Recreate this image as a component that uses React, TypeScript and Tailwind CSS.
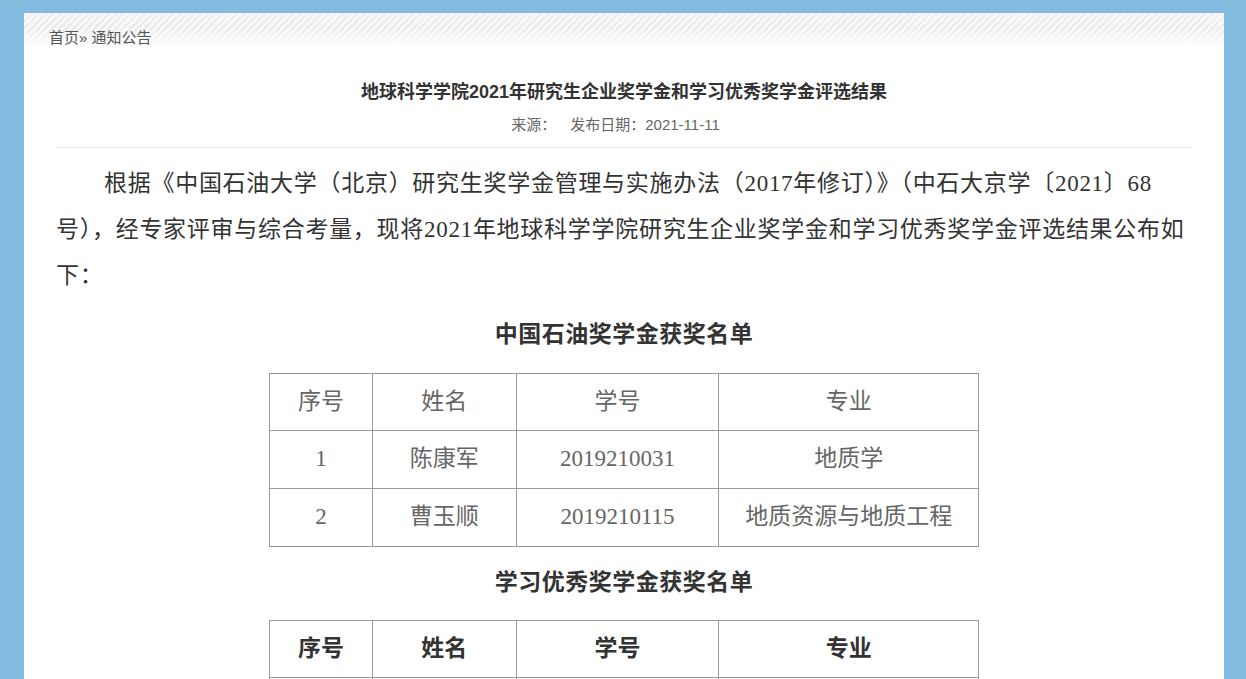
import React from 'react';

const sans = "font-['Liberation_Sans','Noto_Sans_CJK_SC',sans-serif]";
const serif = "font-['Liberation_Serif','Noto_Sans_CJK_SC',serif]";

const oilRows = [
  { no: '1', name: '陈康军', id: '2019210031', major: '地质学' },
  { no: '2', name: '曹玉顺', id: '2019210115', major: '地质资源与地质工程' },
];

function AwardTable({ rows, boldHead }: { rows: typeof oilRows; boldHead?: boolean }) {
  const th = `border border-[#999] h-[57px] text-center ${boldHead ? 'font-bold text-[#333]' : 'font-normal text-[#666]'}`;
  const td = 'border border-[#999] h-[58px] text-center text-[#666]';
  return (
    <table className="mx-auto w-[710px] border-collapse text-[23px]">
      <colgroup>
        <col className="w-[103px]" />
        <col className="w-[144px]" />
        <col className="w-[203px]" />
        <col className="w-[260px]" />
      </colgroup>
      <thead>
        <tr>
          <th className={th}>序号</th>
          <th className={th}>姓名</th>
          <th className={th}>学号</th>
          <th className={th}>专业</th>
        </tr>
      </thead>
      <tbody>
        {rows.map((r) => (
          <tr key={r.id}>
            <td className={td}>{r.no}</td>
            <td className={td}>{r.name}</td>
            <td className={td}>{r.id}</td>
            <td className={td}>{r.major}</td>
          </tr>
        ))}
      </tbody>
    </table>
  );
}

export default function App() {
  return (
    <div className="min-h-screen bg-[#82bbdf] pt-[13px] pl-[24px] pr-[22px]">
      <div className="bg-white min-h-[700px]">
        {/* breadcrumb strip */}
        <div className="relative h-[35px] bg-[repeating-linear-gradient(135deg,#e8e8e8_0px,#e8e8e8_2px,#f7f7f7_2px,#f7f7f7_5px)]">
          <div className="absolute inset-0 bg-linear-to-b from-white/30 via-white/0 via-40% to-white" />
          <div className={`relative pl-[25px] pt-[16px] text-[15px] leading-[18px] text-[#555] ${sans}`}>
            首页» 通知公告
          </div>
        </div>

        <div className="px-[32px]">
          <h1 className={`mt-[29px] text-center text-[18px] leading-[30px] font-bold text-[#333] ${sans}`}>
            地球科学学院2021年研究生企业奖学金和学习优秀奖学金评选结果
          </h1>
          <div className={`mt-[8px] pr-[17px] text-center text-[15px] leading-[20px] text-[#666] ${sans}`}>
            来源：<span className="ml-[14px]">发布日期：2021-11-11</span>
          </div>
          <div className="mt-[12px] h-px bg-[#e8e8e8]" />

          <div className={`${serif} text-[#333]`}>
            <p className="mt-[13px] text-[23px] leading-[46px] indent-[48px] tracking-[0.72px]">
              根据《中国石油大学（北京）研究生奖学金管理与实施办法（2017年修订）》（中石大京学〔2021〕68号），经专家评审与综合考量，现将2021年地球科学学院研究生企业奖学金和学习优秀奖学金评选结果公布如下：
            </p>

            <p className="mt-[13px] text-center text-[23px] leading-[46px] font-bold tracking-[0.5px]">中国石油奖学金获奖名单</p>
            <div className="mt-[15px]">
              <AwardTable rows={oilRows} />
            </div>

            <p className="mt-[13px] text-center text-[23px] leading-[46px] font-bold tracking-[0.5px]">学习优秀奖学金获奖名单</p>
            <div className="mt-[14px]">
              <AwardTable rows={oilRows} boldHead />
            </div>
          </div>
        </div>
      </div>
    </div>
  );
}
